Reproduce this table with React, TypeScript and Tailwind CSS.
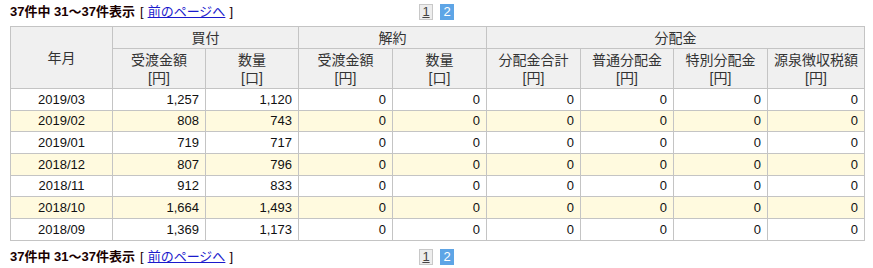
import type { ReactNode } from 'react';

type Row = {
  month: string;
  buyAmount: string;
  buyQty: string;
};

const rows: Row[] = [
  { month: '2019/03', buyAmount: '1,257', buyQty: '1,120' },
  { month: '2019/02', buyAmount: '808', buyQty: '743' },
  { month: '2019/01', buyAmount: '719', buyQty: '717' },
  { month: '2018/12', buyAmount: '807', buyQty: '796' },
  { month: '2018/11', buyAmount: '912', buyQty: '833' },
  { month: '2018/10', buyAmount: '1,664', buyQty: '1,493' },
  { month: '2018/09', buyAmount: '1,369', buyQty: '1,173' },
];

const subHeads: [string, string][] = [
  ['受渡金額', '[円]'],
  ['数量', '[口]'],
  ['受渡金額', '[円]'],
  ['数量', '[口]'],
  ['分配金合計', '[円]'],
  ['普通分配金', '[円]'],
  ['特別分配金', '[円]'],
  ['源泉徴収税額', '[円]'],
];

function Th({
  children,
  colSpan,
  rowSpan,
}: {
  children: ReactNode;
  colSpan?: number;
  rowSpan?: number;
}) {
  return (
    <th
      colSpan={colSpan}
      rowSpan={rowSpan}
      className="border border-[#c4c4c4] bg-[#f0f0f0] font-normal text-[14px] leading-[18px] text-[#333] align-middle"
    >
      {children}
    </th>
  );
}

/** Count line + pager, used above and below the table */
function Summary() {
  return (
    <div className="grid grid-cols-[1fr_auto_1fr] items-center h-[22px]">
      <div className="text-[13px] whitespace-nowrap text-[#1a0000]">
        <span className="font-bold">37件中 31〜37件表示</span>
        <span className="ml-[5px]">[</span>
        <a href="#" className="text-[#1a1acc] underline mx-[4px]">前のページへ</a>
        <span>]</span>
      </div>
      <div className="flex items-center gap-[7px]">
        <span className="w-[14px] h-[16px] flex items-center justify-center border border-[#c8c8c8] bg-[#ededed] text-[13px] text-[#444] underline">1</span>
        <span className="w-[14px] h-[16px] flex items-center justify-center bg-[#5ea5e6] text-[13px] text-white">2</span>
      </div>
      <div />
    </div>
  );
}

export default function App() {
  return (
    <div className="w-[873px] h-[268px] bg-white px-[10px] pt-[1px] overflow-hidden font-['Liberation_Sans','Noto_Sans_CJK_JP',sans-serif]">
      <Summary />
      <table className="table-fixed border-collapse w-[854px] mt-[3px] mb-[5px]">
        <colgroup>
          <col className="w-[102px]" />
          <col className="w-[93px]" />
          <col className="w-[93px]" />
          <col className="w-[94px]" />
          <col className="w-[94px]" />
          <col className="w-[94px]" />
          <col className="w-[93px]" />
          <col className="w-[94px]" />
          <col className="w-[97px]" />
        </colgroup>
        <thead>
          <tr className="h-[22px]">
            <Th rowSpan={2}>年月</Th>
            <Th colSpan={2}>買付</Th>
            <Th colSpan={2}>解約</Th>
            <Th colSpan={4}>分配金</Th>
          </tr>
          <tr className="h-[40px]">
            {subHeads.map(([label, unit], i) => (
              <Th key={i}>
                <div>{label}</div>
                <div>{unit}</div>
              </Th>
            ))}
          </tr>
        </thead>
        <tbody className="text-[13px] text-[#111]">
          {rows.map((r, i) => (
            <tr key={r.month} className={`h-[21.7px] ${i % 2 === 1 ? 'bg-[#fffadf]' : 'bg-white'}`}>
              <td className="border border-[#c4c4c4] text-center">{r.month}</td>
              <td className="border border-[#c4c4c4] text-right pr-[6px]">{r.buyAmount}</td>
              <td className="border border-[#c4c4c4] text-right pr-[6px]">{r.buyQty}</td>
              {Array.from({ length: 6 }).map((_, j) => (
                <td key={j} className="border border-[#c4c4c4] text-right pr-[6px]">0</td>
              ))}
            </tr>
          ))}
        </tbody>
      </table>
      <Summary />
    </div>
  );
}
